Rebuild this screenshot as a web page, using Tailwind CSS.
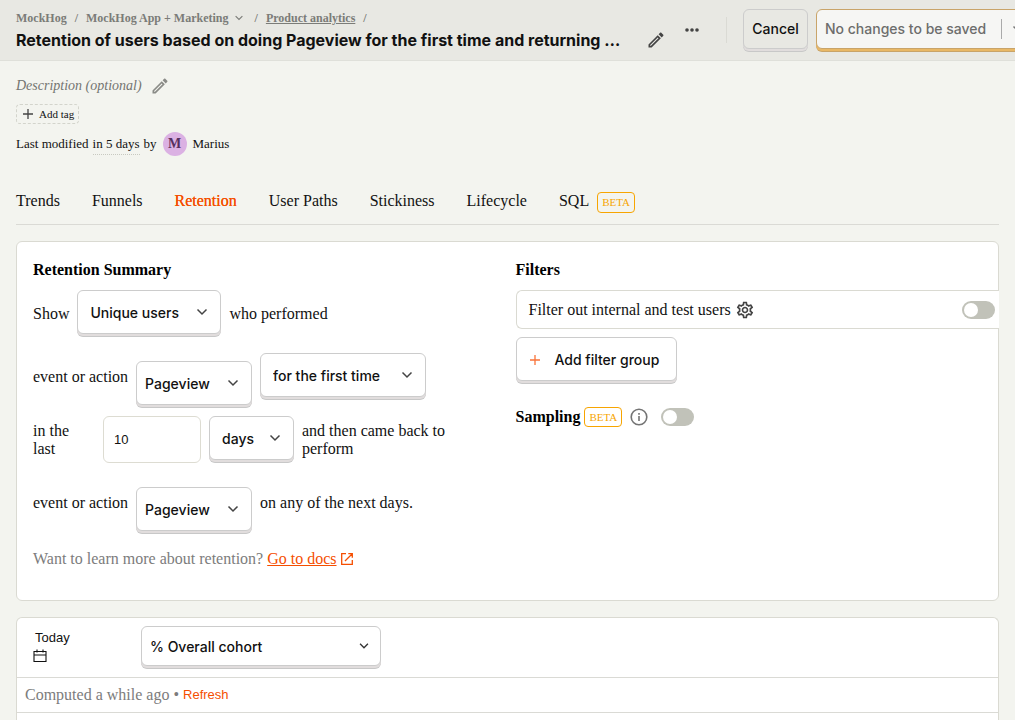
<!DOCTYPE html>
<html lang="en">
<head>
<meta charset="utf-8">
<title>Retention insight</title>
<meta name="viewport" content="width=device-width, initial-scale=1">
<script src="https://cdn.jsdelivr.net/npm/@tailwindcss/browser@4"></script>
</head>
<body class="min-h-screen overflow-x-hidden bg-[#f3f4ef] font-['Liberation_Serif',serif] text-base leading-[18px] text-[#111]">
<svg class="hidden" aria-hidden="true">
  <symbol id="chevron" viewBox="0 0 16 16"><path d="M3.5 5.5 8 10l4.5-4.5" fill="none" stroke="currentColor" stroke-width="1.5"/></symbol>
  <symbol id="pencil" viewBox="0 0 24 24"><path fill="currentColor" d="m14.06 9.02.92.92L5.92 19H5v-.92l9.06-9.06M17.66 3c-.25 0-.51.1-.7.29l-1.83 1.83 3.75 3.75 1.83-1.83a.996.996 0 0 0 0-1.41l-2.34-2.34c-.2-.2-.45-.29-.71-.29zm-3.6 3.19L3 17.25V21h3.75L17.81 9.94l-3.75-3.75z"/></symbol>
  <symbol id="plus" viewBox="0 0 12 12"><path d="M6 1v10M1 6h10" fill="none" stroke="currentColor" stroke-width="1.3"/></symbol>
</svg>

<header class="flex h-[61px] items-start gap-[18px] overflow-hidden border-b border-[#dfe0da] bg-[#e8e8e3] pl-4">
  <div class="min-w-0 flex-1 pt-[9px]">
    <nav aria-label="Breadcrumb" class="flex items-center gap-2 whitespace-nowrap text-xs leading-[18px] font-bold text-[#7b7c78]">
      <a href="#">MockHog</a><span>/</span>
      <a href="#" class="flex items-center gap-1">MockHog App + Marketing<svg class="size-3"><use href="#chevron"/></svg></a><span class="pl-[2px]">/</span>
      <a href="#" class="underline">Product analytics</a><span>/</span>
    </nav>
    <div class="flex items-center gap-2">
      <h1 class="min-w-0 flex-1 whitespace-nowrap font-['Inter',sans-serif] text-base leading-[26px] font-bold">Retention of users based on doing Pageview for the first time and returning …</h1>
      <button aria-label="Edit name" class="text-[#444]"><svg class="size-5"><use href="#pencil"/></svg></button>
    </div>
  </div>
  <div class="-mr-5 flex shrink-0 items-start gap-2 pt-[9px] font-['Inter',sans-serif] text-sm font-medium">
    <button aria-label="More options" class="mr-[18px] flex h-[42px] w-4 items-center justify-center text-[#444]"><svg viewBox="0 0 16 6" class="w-4" fill="currentColor"><circle cx="3" cy="3" r="1.8"/><circle cx="8" cy="3" r="1.8"/><circle cx="13" cy="3" r="1.8"/></svg></button>
    <div class="mt-2 mr-2 h-[26px] w-px bg-[#dadad4]"></div>
    <button class="h-10 w-[65px] rounded-md border border-[#ccc] shadow-[0_2px_0_0_#e1dddd,0_3px_0_0_#c8c8c8]">Cancel</button>
    <div class="flex h-10 items-center rounded-md border border-[#c9a469] bg-[#f6f6f4] shadow-[0_2px_0_0_#e9b866,0_3px_0_0_#c9a469]">
      <button class="h-full w-[184px] px-2 text-left text-[#6d6d6c]" disabled>No changes to be saved</button>
      <span class="h-5 w-px bg-[#aaa]"></span>
      <button aria-label="More save options" class="h-full px-2 text-[#777]"><svg class="size-4"><use href="#chevron"/></svg></button>
    </div>
  </div>
</header>

<main class="px-4 pt-[15px]">
  <div class="flex items-center gap-2 text-sm leading-[18px] text-[#737471] italic">
    <span>Description (optional)</span>
    <button aria-label="Edit description" class="text-[#8a8b87]"><svg class="size-5"><use href="#pencil"/></svg></button>
  </div>
  <button class="mt-2 flex h-5 items-center gap-[5px] rounded border border-dashed border-[#d3d4cc] pr-1 pl-[5px] text-[11px]"><svg class="size-3 text-[#444]"><use href="#plus"/></svg>Add tag</button>
  <div class="mt-2 flex h-6 items-center gap-1 text-[13px]">
    <span>Last modified</span><span class="border-b border-dotted border-[#c8c9c1] pt-px leading-5">in 5 days</span><span>by</span>
    <span class="mx-[2px] flex size-6 items-center justify-center rounded-full bg-[#dbb1e3] text-sm font-bold text-[#57305f]">M</span>
    <span>Marius</span>
  </div>

  <nav aria-label="Insight type" class="mt-6 flex h-[45px] items-center gap-8 border-b border-[#dadad5] pb-[2px]">
    <a href="#">Trends</a>
    <a href="#">Funnels</a>
    <a href="#" aria-current="page" class="text-[#f54e00] [text-shadow:0_0_0.25px_currentColor]">Retention</a>
    <a href="#">User Paths</a>
    <a href="#">Stickiness</a>
    <a href="#">Lifecycle</a>
    <a href="#" class="flex items-center gap-2">SQL<span class="mt-[3px] rounded border border-[#f7a501] px-1 text-[11px] leading-[19px] text-[#f7a501]">BETA</span></a>
  </nav>

  <section class="mt-4 grid grid-cols-2 gap-4 rounded-md border border-[#dadad2] bg-white px-4 pt-4 pb-8">
    <div>
      <h2 class="leading-6 font-bold text-black">Retention Summary</h2>
      <div class="mt-2 flex h-[47px] items-start gap-2">
        <span class="leading-[47px]">Show</span>
        <div class="relative">
          <select aria-label="Aggregation" class="h-11 w-36 appearance-none rounded-md border border-[#ccc] bg-white pt-[2px] pl-3 font-['Inter',sans-serif] text-sm font-medium shadow-[0_2px_0_0_#e1dddd,0_3px_0_0_#c8c8c8]"><option>Unique users</option></select>
          <svg class="pointer-events-none absolute top-[14px] right-[11px] size-4 text-[#444]"><use href="#chevron"/></svg>
        </div>
        <span class="leading-[47px]">who performed</span>
      </div>
      <div class="mt-4 flex items-start gap-2 whitespace-nowrap">
        <span class="leading-[47px]">event or action</span>
        <div class="relative mt-2 pb-[3px]">
          <select aria-label="Target event" class="h-11 w-[116px] appearance-none rounded-md border border-[#ccc] bg-white pt-[2px] pl-2 font-['Inter',sans-serif] text-sm font-medium shadow-[0_2px_0_0_#e1dddd,0_3px_0_0_#c8c8c8]"><option>Pageview</option></select>
          <svg class="pointer-events-none absolute top-[14px] right-[11px] size-4 text-[#444]"><use href="#chevron"/></svg>
        </div>
        <div class="relative">
          <select aria-label="Retention type" class="h-11 w-[166px] appearance-none rounded-md border border-[#ccc] bg-white pt-[2px] pl-3 font-['Inter',sans-serif] text-sm font-medium shadow-[0_2px_0_0_#e1dddd,0_3px_0_0_#c8c8c8]"><option>for the first time</option></select>
          <svg class="pointer-events-none absolute top-[14px] right-[11px] size-4 text-[#444]"><use href="#chevron"/></svg>
        </div>
      </div>
      <div class="mt-2 flex h-[47px] items-start gap-2">
        <label for="period" class="w-[62px] shrink-0 self-center pr-4">in the last</label>
        <input id="period" type="text" inputmode="numeric" value="10" class="h-[47px] w-[98px] shrink-0 rounded-md border border-[#dddcd2] bg-white px-[10px] font-['Liberation_Sans',sans-serif] text-[13px]">
        <div class="relative shrink-0">
          <select aria-label="Period unit" class="h-11 w-[85px] appearance-none rounded-md border border-[#ccc] bg-white pt-[2px] pl-3 font-['Inter',sans-serif] text-sm font-medium shadow-[0_2px_0_0_#e1dddd,0_3px_0_0_#c8c8c8]"><option>days</option></select>
          <svg class="pointer-events-none absolute top-[14px] right-[11px] size-4 text-[#444]"><use href="#chevron"/></svg>
        </div>
        <span class="self-center">and then came back to perform</span>
      </div>
      <div class="mt-4 flex items-start gap-2 whitespace-nowrap">
        <span class="leading-[47px]">event or action</span>
        <div class="relative mt-2 pb-[3px]">
          <select aria-label="Returning event" class="h-11 w-[116px] appearance-none rounded-md border border-[#ccc] bg-white pt-[2px] pl-2 font-['Inter',sans-serif] text-sm font-medium shadow-[0_2px_0_0_#e1dddd,0_3px_0_0_#c8c8c8]"><option>Pageview</option></select>
          <svg class="pointer-events-none absolute top-[14px] right-[11px] size-4 text-[#444]"><use href="#chevron"/></svg>
        </div>
        <span class="leading-[47px]">on any of the next days.</span>
      </div>
      <p class="mt-4 flex items-center gap-1 text-[#7c7c7c]">Want to learn more about retention? <a href="#" class="flex items-center gap-[3px] text-[#f54e00]"><span class="underline">Go to docs</span><svg viewBox="0 0 14 14" class="size-[14px]" fill="none" stroke="currentColor" stroke-width="1.3"><path d="M6 1.7H1.7v10.6h10.6V8M8.3 1.7h4v4M12.3 1.7 5 9"/></svg></a></p>
    </div>

    <div>
      <h2 class="leading-6 font-bold text-black">Filters</h2>
      <div class="relative mt-2 -mr-[17px] flex h-[39px] items-center rounded-l-md border border-r-0 border-[#dadad2] bg-white pr-1 pl-3">
        <label for="internal">Filter out internal and test users</label>
        <button aria-label="Test account settings" class="ml-1 text-[#444]"><svg viewBox="0 0 24 24" class="size-5" fill="currentColor"><path d="M19.43 12.98c.04-.32.07-.64.07-.98 0-.34-.03-.66-.07-.98l2.11-1.65c.19-.15.24-.42.12-.64l-2-3.46a.5.5 0 0 0-.61-.22l-2.49 1c-.52-.4-1.08-.73-1.69-.98l-.38-2.65A.488.488 0 0 0 14 2h-4c-.25 0-.46.18-.49.42l-.38 2.65c-.61.25-1.17.59-1.69.98l-2.49-1a.5.5 0 0 0-.61.22l-2 3.46c-.13.22-.07.49.12.64l2.11 1.65c-.04.32-.07.65-.07.98 0 .33.03.66.07.98l-2.11 1.65c-.19.15-.24.42-.12.64l2 3.46c.12.22.39.29.61.22l2.49-1c.52.4 1.08.73 1.69.98l.38 2.65c.03.24.24.42.49.42h4c.25 0 .46-.18.49-.42l.38-2.65c.61-.25 1.17-.59 1.69-.98l2.49 1c.23.09.49 0 .61-.22l2-3.46c.12-.22.07-.49-.12-.64l-2.11-1.65zm-1.98-1.71c.04.31.05.52.05.73 0 .21-.02.43-.05.73l-.14 1.13.89.7 1.08.84-.7 1.21-1.27-.51-1.04-.42-.9.68c-.43.32-.84.56-1.25.73l-1.06.43-.16 1.13-.2 1.35h-1.4l-.19-1.35-.16-1.13-1.06-.43c-.43-.18-.83-.41-1.23-.71l-.91-.7-1.06.43-1.27.51-.7-1.21 1.08-.84.89-.7-.14-1.13c-.03-.31-.05-.54-.05-.74s.02-.43.05-.73l.14-1.13-.89-.7-1.08-.84.7-1.21 1.27.51 1.04.42.9-.68c.43-.32.84-.56 1.25-.73l1.06-.43.16-1.13.2-1.35h1.39l.19 1.35.16 1.13 1.06.43c.43.18.83.41 1.23.71l.91.7 1.06-.43 1.27-.51.7 1.21-1.07.85-.89.7.14 1.13zM12 8c-2.21 0-4 1.79-4 4s1.79 4 4 4 4-1.79 4-4-1.79-4-4-4zm0 6c-1.1 0-2-.9-2-2s.9-2 2-2 2 .9 2 2-.9 2-2 2z"/></svg></button>
        <input id="internal" type="checkbox" role="switch" class="ml-auto flex h-[18px] w-[33px] appearance-none items-center rounded-full bg-[#c1c2b9] px-[2px] before:size-[14px] before:rounded-full before:bg-white">
      </div>
      <button class="mt-2 flex h-11 w-[161px] items-center gap-[14px] whitespace-nowrap rounded-md border border-[#ccc] bg-white px-3 pt-px font-['Inter',sans-serif] text-sm font-medium shadow-[0_2px_0_0_#e1dddd,0_3px_0_0_#c8c8c8]"><svg class="size-3 text-[#f9733a]"><use href="#plus"/></svg>Add filter group</button>
      <div class="mt-[26px] flex h-5 items-center">
        <label for="sampling" class="font-bold text-black">Sampling</label>
        <span class="ml-1 rounded border border-[#f7a501] px-1 text-[11px] leading-[18px] text-[#f7a501]">BETA</span>
        <svg viewBox="0 0 18 18" class="ml-2 size-[18px] text-[#747474]" fill="none" stroke="currentColor" stroke-width="1.6"><circle cx="9" cy="9" r="7.8"/><path d="M9 8v5M9 5v1.7"/></svg>
        <input id="sampling" type="checkbox" role="switch" class="ml-[13px] flex h-[18px] w-[33px] appearance-none items-center rounded-full bg-[#c1c2b9] px-[2px] before:size-[14px] before:rounded-full before:bg-white">
      </div>
    </div>
  </section>

  <section class="mt-4 rounded-t-md border border-b-0 border-[#dadad2] bg-white">
    <div class="flex h-[60px] items-start border-b border-[#dadad5] pt-2 pl-4">
      <button class="mt-[3px] w-[108px] text-left font-['Liberation_Sans',sans-serif] text-[13px] leading-[18px]"><span class="block pl-[2px]">Today</span><svg viewBox="0 0 14 14" class="mt-[2px] size-[14px]" fill="none" stroke="currentColor" stroke-width="1.1"><path d="M1 2.5h12v10H1zM1 6h12M4 .5v3M10 .5v3"/></svg></button>
      <div class="relative">
        <select aria-label="Cohort reference" class="h-10 w-60 appearance-none rounded-md border border-[#ccc] bg-white pt-[2px] pl-2 font-['Inter',sans-serif] text-sm font-medium shadow-[0_2px_0_0_#e1dddd,0_3px_0_0_#c8c8c8]"><option>% Overall cohort</option></select>
        <svg class="pointer-events-none absolute top-[13px] right-[10px] size-[14px] text-[#333]"><use href="#chevron"/></svg>
      </div>
    </div>
    <div class="flex h-[35px] items-center gap-1 border-b border-[#dadad5] px-2 text-[#7c7c7c]">Computed a while ago • <button class="font-['Liberation_Sans',sans-serif] text-[13px] text-[#f54e00]">Refresh</button></div>
    <div class="h-4"></div>
  </section>
</main>
</body>
</html>
